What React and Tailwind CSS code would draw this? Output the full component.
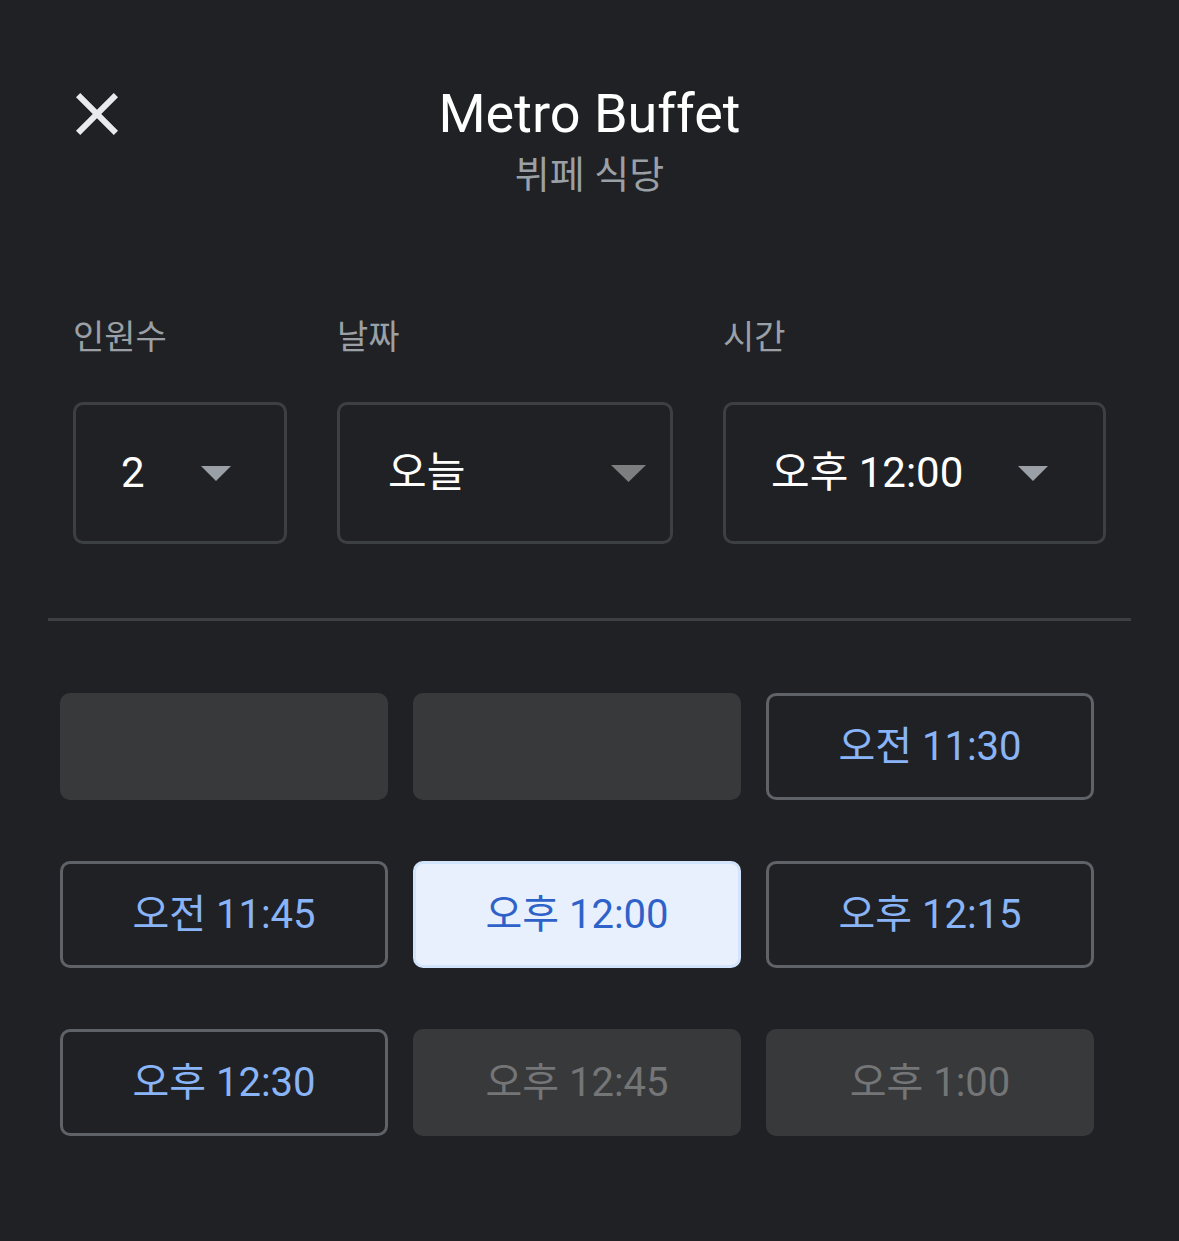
import React from "react";

const font = { fontFamily: '"Roboto", "Noto Sans CJK KR", sans-serif' };

const Arrow = ({ w = 30, h = 15, color = "#9aa0a6" }) => (
  <svg width={w} height={h} viewBox="0 0 30 15" preserveAspectRatio="none">
    <path d="M0 0 L30 0 L15 15 Z" fill={color} />
  </svg>
);

const CloseIcon = () => (
  <svg width="72" height="72" viewBox="0 0 24 24">
    <path
      fill="#e8eaed"
      d="M19 6.41 17.59 5 12 10.59 6.41 5 5 6.41 10.59 12 5 17.59 6.41 19 12 13.41 17.59 19 19 17.59 13.41 12z"
    />
  </svg>
);

const slots = [
  { label: "", state: "empty" },
  { label: "", state: "empty" },
  { label: "오전 11:30", state: "open" },
  { label: "오전 11:45", state: "open" },
  { label: "오후 12:00", state: "selected" },
  { label: "오후 12:15", state: "open" },
  { label: "오후 12:30", state: "open" },
  { label: "오후 12:45", state: "disabled" },
  { label: "오후 1:00", state: "disabled" },
];

const Slot = ({ label, state }) => {
  const styles = {
    empty: "bg-[#38393b]",
    disabled: "bg-[#38393b] text-[#747576]",
    open: "border-[3px] border-[#5f6368] text-[#8ab4f8]",
    selected: "border-[3px] border-[#d2e3fc] bg-[#e8f0fe] text-[#2f62c9]",
  };
  return (
    <div
      className={`h-[107px] rounded-[10px] flex items-center justify-center text-[40px] leading-none ${styles[state]}`}
    >
      {label}
    </div>
  );
};

export default function App() {
  return (
    <div className="w-[1179px] h-[1241px] bg-[#202124] overflow-hidden" style={font}>
      {/* Header */}
      <div className="grid grid-cols-[1fr_auto_1fr] pt-[78px]">
        <div className="pl-[61px]">
          <CloseIcon />
        </div>
        <div className="flex flex-col items-center">
          <div className="text-[54px] leading-[64px] text-white mt-[4px]">Metro Buffet</div>
          <div className="text-[38px] leading-[46px] text-[#9aa0a6] mt-[6px]">뷔페 식당</div>
        </div>
        <div />
      </div>

      {/* Filters */}
      <div className="flex gap-[50px] pl-[73px] mt-[118px]">
        <div className="flex flex-col">
          <div className="text-[34px] leading-[42px] text-[#9aa0a6]">인원수</div>
          <div className="mt-[44px] w-[214px] h-[142px] rounded-[10px] border-[3px] border-[#3c4043] flex items-center justify-between pl-[45px] pr-[53px]">
            <span className="text-[42px] text-white leading-none">2</span>
            <Arrow />
          </div>
        </div>
        <div className="flex flex-col">
          <div className="text-[34px] leading-[42px] text-[#9aa0a6]">날짜</div>
          <div className="mt-[44px] w-[336px] h-[142px] rounded-[10px] border-[3px] border-[#3c4043] flex items-center justify-between pl-[48px] pr-[24px]">
            <span className="text-[42px] text-white leading-none">오늘</span>
            <Arrow w={35} h={17} color="#7d7e80" />
          </div>
        </div>
        <div className="flex flex-col">
          <div className="text-[34px] leading-[42px] text-[#9aa0a6]">시간</div>
          <div className="mt-[44px] w-[383px] h-[142px] rounded-[10px] border-[3px] border-[#3c4043] flex items-center justify-between pl-[45px] pr-[55px]">
            <span className="text-[42px] text-white leading-none">오후 12:00</span>
            <Arrow />
          </div>
        </div>
      </div>

      {/* Divider */}
      <div className="mx-[48px] mt-[74px] h-[3px] bg-[#3c4043]" />

      {/* Slots */}
      <div className="grid grid-cols-[328px_328px_328px] gap-x-[25px] gap-y-[61px] pl-[60px] mt-[72px]">
        {slots.map((s, i) => (
          <Slot key={i} {...s} />
        ))}
      </div>
    </div>
  );
}
